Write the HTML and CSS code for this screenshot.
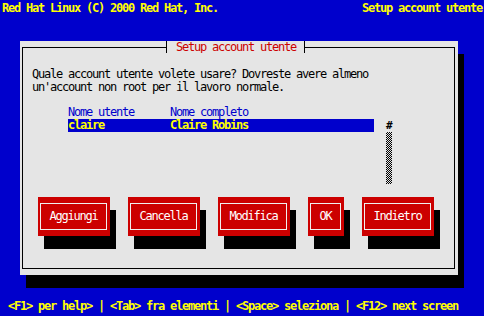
FILE: index.html
```html
<!DOCTYPE html>
<html lang="it">
<head>
<meta charset="utf-8">
<title>Setup account utente</title>
<link rel="stylesheet" href="styles.css">
</head>
<body>
<div class="screen">
  <div class="topbar"><span>Red Hat Linux (C) 2000 Red Hat, Inc.</span><span>Setup account utente</span></div>
  <div class="dialog">
    <div class="frame">
      <div class="legend">Setup account utente</div>
      <p class="prompt">Quale account utente volete usare? Dovreste avere almeno
un'account non root per il lavoro normale.</p>
      <div class="list-head"><span class="col-user">Nome utente</span><span>Nome completo</span></div>
      <div class="list-wrap">
        <div class="list">
          <div class="row selected"><span class="col-user">claire</span><span>Claire Robins</span></div>
        </div>
        <div class="scrollbar"><div class="thumb">#</div><div class="track"></div></div>
      </div>
      <div class="buttons">
        <div class="btn"><span class="btn-inner">Aggiungi</span></div>
        <div class="btn"><span class="btn-inner">Cancella</span></div>
        <div class="btn"><span class="btn-inner">Modifica</span></div>
        <div class="btn small"><span class="btn-inner">OK</span></div>
        <div class="btn"><span class="btn-inner">Indietro</span></div>
      </div>
    </div>
  </div>
  <div class="footer">&lt;F1&gt; per help&gt; | &lt;Tab&gt; fra elementi | &lt;Space&gt; seleziona | &lt;F12&gt; next screen</div>
</div>
</body>
</html>
```
FILE: styles.css
```css
html, body {
  margin: 0;
  padding: 0;
}
body {
  background: #0000cc;
  width: 484px;
  height: 316px;
  overflow: hidden;
  font-family: "DejaVu Sans Mono", monospace;
  font-size: 12px;
  line-height: 13px;
  letter-spacing: -1.224px;
}
.topbar {
  display: flex;
  justify-content: space-between;
  padding: 2px 2px 0;
  height: 13px;
  color: #ffff00;
  font-weight: bold;
  white-space: pre;
}
.dialog {
  margin: 26px 0 0 20px;
  width: 438px;
  height: 234px;
  box-sizing: border-box;
  background: #e5e5e5;
  box-shadow: 6px 13px 0 #000;
  padding: 6px 3px 6px 2px;
  display: flex;
}
.frame {
  flex: 1;
  border: 1px solid #000;
  display: flex;
  flex-direction: column;
}
.legend {
  align-self: flex-start;
  margin: -7px 0 0 143px;
  height: 12px;
  line-height: 13px;
  padding: 0 8px 0 9px;
  border-left: 1px solid #000;
  border-right: 1px solid #000;
  background: #e5e5e5;
  color: #cc0000;
  white-space: pre;
  overflow: hidden;
}
.prompt {
  margin: 15px 0 0 9px;
  color: #000;
  white-space: pre;
}
.list-head {
  margin: 12px 0 0 45px;
  display: flex;
  color: #0000cc;
  height: 13px;
  white-space: pre;
}
.col-user {
  width: 102px;
  flex: none;
}
.list-wrap {
  display: flex;
  margin-left: 45px;
  gap: 12px;
  height: 65px;
}
.list {
  width: 306px;
}
.row {
  display: flex;
  height: 13px;
  white-space: pre;
}
.row.selected {
  background: #0000cc;
  color: #ffff00;
  font-weight: bold;
}
.scrollbar {
  width: 6px;
  display: flex;
  flex-direction: column;
}
.thumb {
  height: 13px;
  font-weight: bold;
  color: #000;
  text-align: center;
  letter-spacing: 0;
  font-size: 11px;
}
.track {
  flex: 1;
  background: repeating-conic-gradient(#000 0 25%, #e5e5e5 0 50%) 0 0 / 2px 2px;
}
.buttons {
  display: flex;
  gap: 18px;
  margin: 13px 0 0 15px;
}
.btn {
  width: 72px;
  height: 39px;
  box-sizing: border-box;
  background: #cc0000;
  box-shadow: 6px 13px 0 #000;
  padding: 6px 3px 6px 2px;
  display: flex;
}
.btn.small {
  width: 36px;
}
.btn-inner {
  flex: 1;
  border: 1px solid #f0f0f0;
  color: #ffffff;
  display: flex;
  align-items: center;
  justify-content: center;
  white-space: pre;
}
.footer {
  margin: 25px 0 0 8px;
  color: #ffff00;
  font-weight: bold;
  white-space: pre;
}
```
